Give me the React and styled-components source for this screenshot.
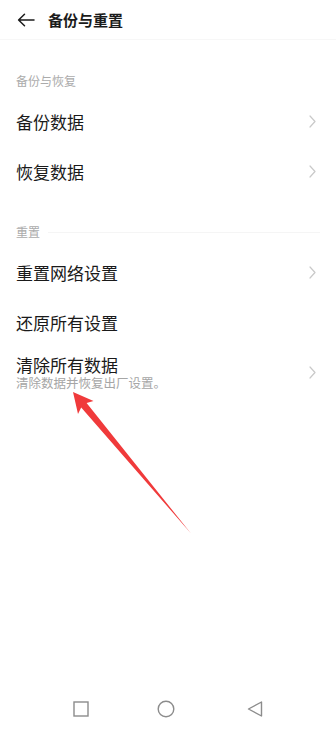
import styled, { createGlobalStyle } from "styled-components";

const sections = [
  {
    title: "备份与恢复",
    line: false,
    items: [
      { label: "备份数据", arrow: true },
      { label: "恢复数据", arrow: true },
    ],
  },
  {
    title: "重置",
    line: true,
    items: [
      { label: "重置网络设置", arrow: true },
      { label: "还原所有设置", arrow: false },
      { label: "清除所有数据", desc: "清除数据并恢复出厂设置。", arrow: true },
    ],
  },
];

const GlobalStyle = createGlobalStyle`
  html, body {
    margin: 0;
    padding: 0;
    background: #ffffff;
  }
  body {
    font-family: "Noto Sans CJK SC", "Noto Sans", sans-serif;
    -webkit-font-smoothing: antialiased;
  }
`;

const Page = styled.div`
  position: relative;
  width: 336px;
  min-height: 100vh;
  display: flex;
  flex-direction: column;
  background: #fff;
  overflow: hidden;
`;

const Header = styled.div`
  height: 40px;
  display: flex;
  align-items: center;
  gap: 13px;
  padding-left: 17px;
  border-bottom: 1px solid #f7f7f7;
  box-sizing: border-box;
`;

const Title = styled.h1`
  margin: 0;
  font-size: 15px;
  font-weight: 600;
  color: #1b1b1b;
  line-height: 20px;
`;

const Content = styled.div`
  flex: 1;
  display: flex;
  flex-direction: column;
`;

const Section = styled.div`
  display: flex;
  flex-direction: column;
  padding-top: ${({ $first }) => ($first ? "33px" : "28px")};
`;

const SectionLabel = styled.div`
  display: flex;
  align-items: center;
  gap: 8px;
  padding: 0 16px;
  height: 16px;
  margin-bottom: 7px;
  font-size: 12px;
  line-height: 16px;
  color: #ababab;

  &::after {
    content: "";
    flex: 1;
    height: 1px;
    background: ${({ $line }) => ($line ? "#f5f5f5" : "transparent")};
  }
`;

const Row = styled.div`
  height: 50px;
  display: flex;
  align-items: center;
  padding: 0 20px 0 16px;
`;

const RowText = styled.div`
  flex: 1;
  display: flex;
  flex-direction: column;
  gap: 1px;
`;

const RowLabel = styled.div`
  font-size: 17px;
  line-height: 19px;
  color: #1a1a1a;
`;

const RowDesc = styled.div`
  font-size: 12.5px;
  line-height: 15px;
  color: #a6a6a6;
`;

const NavBar = styled.div`
  height: 40px;
  display: flex;
  align-items: center;
`;

const NavSlot = styled.div`
  display: flex;
  align-items: center;
  margin-left: ${({ $offset }) => $offset}px;
`;

const Annotation = styled.svg`
  position: absolute;
  top: 0;
  left: 0;
  pointer-events: none;
`;

const BackIcon = () => (
  <svg width="18" height="14" viewBox="0 0 18 14" fill="none">
    <path
      d="M17 7H1.8M7.5 1.2L1.6 7l5.9 5.8"
      stroke="#1b1b1b"
      strokeWidth="1.5"
      strokeLinecap="round"
      strokeLinejoin="round"
    />
  </svg>
);

const Chevron = () => (
  <svg width="7" height="13" viewBox="0 0 7 13" fill="none">
    <path
      d="M1 1l5 5.5L1 12"
      stroke="#c9c9c9"
      strokeWidth="1.2"
      strokeLinecap="round"
      strokeLinejoin="round"
    />
  </svg>
);

const App = () => {
  return (
    <Page>
      <GlobalStyle />

      <Header>
        <BackIcon />
        <Title>备份与重置</Title>
      </Header>

      <Content>
        {sections.map((section, i) => (
          <Section key={section.title} $first={i === 0}>
            <SectionLabel $line={section.line}>{section.title}</SectionLabel>
            {section.items.map((item) => (
              <Row key={item.label}>
                <RowText>
                  <RowLabel>{item.label}</RowLabel>
                  {item.desc && <RowDesc>{item.desc}</RowDesc>}
                </RowText>
                {item.arrow && <Chevron />}
              </Row>
            ))}
          </Section>
        ))}
      </Content>

      <NavBar>
        <NavSlot $offset={73}>
          <svg width="16" height="16" viewBox="0 0 16 16" fill="none">
            <rect x="1" y="1" width="14" height="14" stroke="#8c8c8c" strokeWidth="1.4" />
          </svg>
        </NavSlot>
        <NavSlot $offset={68}>
          <svg width="18" height="18" viewBox="0 0 18 18" fill="none">
            <circle cx="9" cy="9" r="7.8" stroke="#8c8c8c" strokeWidth="1.4" />
          </svg>
        </NavSlot>
        <NavSlot $offset={72}>
          <svg width="16" height="16" viewBox="0 0 16 16" fill="none">
            <path d="M14.5 1L1.5 8l13 7z" stroke="#8c8c8c" strokeWidth="1.4" strokeLinejoin="round" />
          </svg>
        </NavSlot>
      </NavBar>

      <Annotation width="336" height="729" viewBox="0 0 336 729">
        <polygon
          points="73,392 93.5,401 86.6,403 191,533.5 81.2,407.5 78,414"
          fill="#f03a3b"
        />
      </Annotation>
    </Page>
  );
};

export default App;
